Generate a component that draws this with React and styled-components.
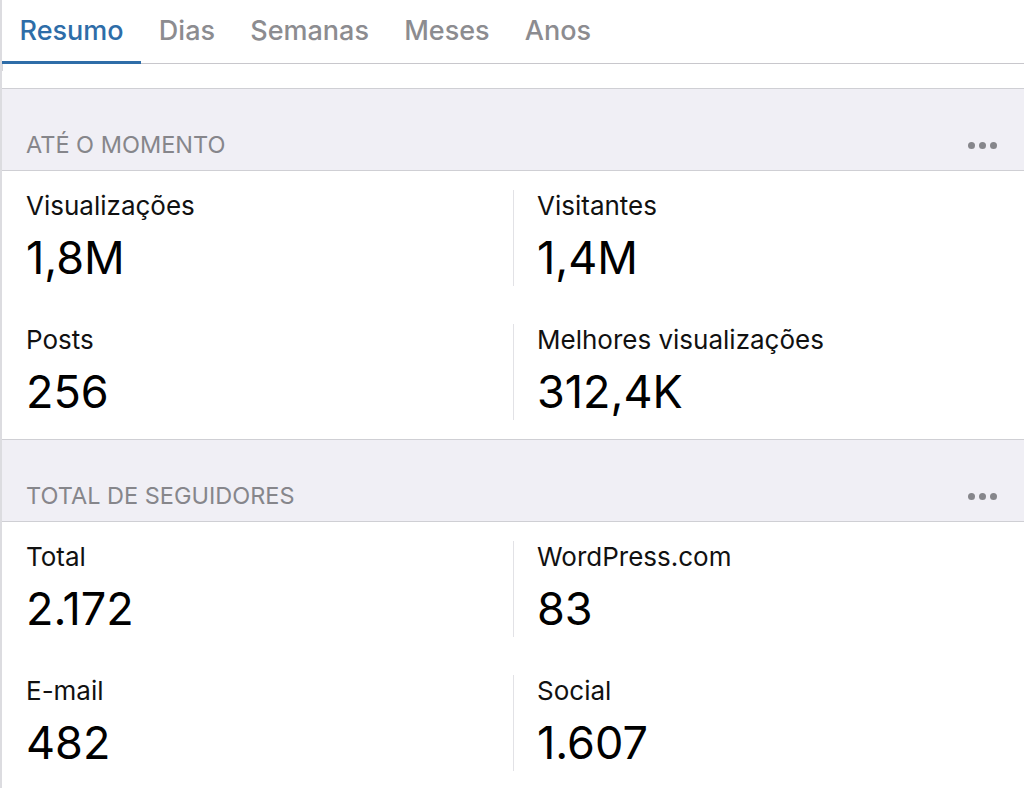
import React, { useState } from "react";
import styled, { createGlobalStyle } from "styled-components";

const GlobalStyle = createGlobalStyle`
    html, body {
        margin: 0;
        padding: 0;
        background: #ffffff;
    }
    body {
        font-family: Inter, Roboto, "Liberation Sans", sans-serif;
        -webkit-font-smoothing: antialiased;
    }
`;

const Page = styled.div`
    width: 1024px;
    height: 788px;
    overflow: hidden;
    box-sizing: border-box;
    border-left: 2px solid #dcdce0;
    background: #ffffff;
`;

const TabBar = styled.nav`
    display: flex;
    height: 63px;
    border-bottom: 1px solid #c8c7cc;
`;

const Tab = styled.button`
    position: relative;
    border: none;
    background: transparent;
    padding: 0 17.6px 3px;
    margin: 0;
    height: 63px;
    font: inherit;
    font-size: 27px;
    font-weight: 500;
    color: ${(p) => (p.$active ? "#2e6da8" : "#8c8c90")};
    cursor: pointer;

    &::after {
        content: "";
        position: absolute;
        left: 0;
        right: 0;
        bottom: -1px;
        height: 3px;
        background: ${(p) => (p.$active ? "#2e6da8" : "transparent")};
    }
`;

const Stub = styled.div`
    height: 24px;
    display: grid;
    grid-template-columns: 511px 1fr;

    &::after {
        content: "";
        width: 1px;
        height: 7px;
        background: #d6d6da;
    }
`;

const SectionHeader = styled.div`
    display: flex;
    align-items: flex-end;
    justify-content: space-between;
    height: 81px;
    box-sizing: content-box;
    padding: 0 27px 0 24px;
    border-top: 1px solid #cfcfd4;
    border-bottom: 1px solid #cfcfd4;
    background: #f0eff5;
`;

const SectionTitle = styled.h2`
    margin: 0 0 11px;
    font-size: 23.5px;
    font-weight: 400;
    color: #86868b;
    text-transform: uppercase;
`;

const MoreButton = styled.button`
    display: flex;
    gap: 4px;
    border: none;
    background: transparent;
    padding: 0;
    margin: 0 0 21px;
    cursor: pointer;

    span {
        width: 7px;
        height: 7px;
        border-radius: 50%;
        background: #86868b;
    }
`;

const StatsGrid = styled.div`
    display: grid;
    grid-template-columns: 511px 1fr;
    grid-auto-rows: 134px;
`;

const Cell = styled.div`
    display: flex;
    flex-direction: column;
    margin: 19px 0;
    padding-left: ${(p) => (p.$right ? "23px" : "24px")};
    border-left: ${(p) => (p.$right ? "1px solid #e2e2e6" : "none")};
`;

const Label = styled.div`
    font-size: 26px;
    line-height: 32px;
    color: #111111;
`;

const Value = styled.div`
    margin-top: 11px;
    font-size: 45px;
    line-height: 50px;
    color: #000000;
`;

const sections = [
    {
        title: "Até o momento",
        stats: [
            ["Visualizações", "1,8M"],
            ["Visitantes", "1,4M"],
            ["Posts", "256"],
            ["Melhores visualizações", "312,4K"],
        ],
    },
    {
        title: "Total de seguidores",
        stats: [
            ["Total", "2.172"],
            ["WordPress.com", "83"],
            ["E-mail", "482"],
            ["Social", "1.607"],
        ],
    },
];

const tabs = ["Resumo", "Dias", "Semanas", "Meses", "Anos"];

const App = () => {
    const [activeTab, setActiveTab] = useState("Resumo");

    return (
        <>
            <GlobalStyle />
            <Page>
                <TabBar>
                    {tabs.map((tab) => (
                        <Tab
                            key={tab}
                            $active={tab === activeTab}
                            onClick={() => setActiveTab(tab)}
                        >
                            {tab}
                        </Tab>
                    ))}
                </TabBar>
                <Stub />
                {sections.map((section) => (
                    <section key={section.title}>
                        <SectionHeader>
                            <SectionTitle>{section.title}</SectionTitle>
                            <MoreButton aria-label="Mais">
                                <span />
                                <span />
                                <span />
                            </MoreButton>
                        </SectionHeader>
                        <StatsGrid>
                            {section.stats.map(([label, value], i) => (
                                <Cell key={label} $right={i % 2 === 1}>
                                    <Label>{label}</Label>
                                    <Value>{value}</Value>
                                </Cell>
                            ))}
                        </StatsGrid>
                    </section>
                ))}
            </Page>
        </>
    );
};

export default App;
